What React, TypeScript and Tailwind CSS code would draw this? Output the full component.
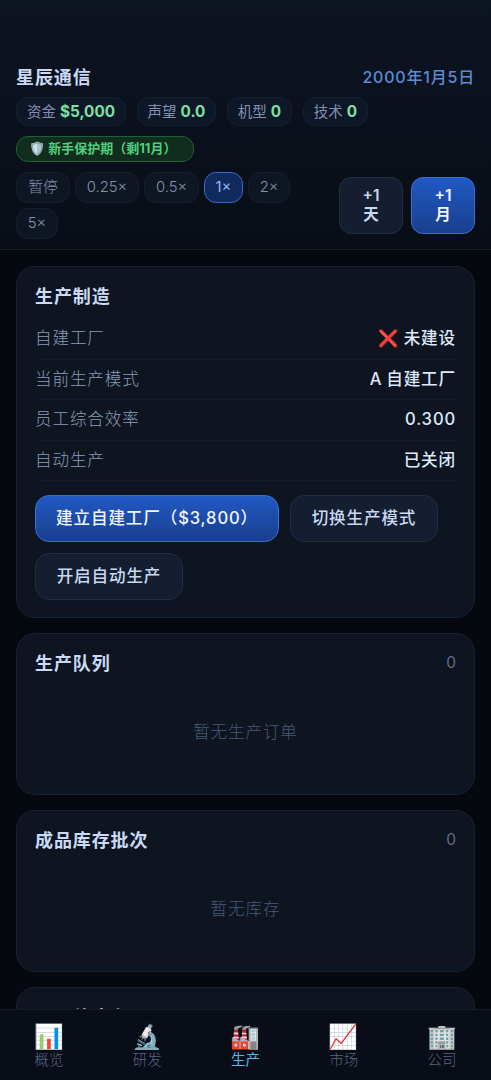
import { useState } from 'react';
import type { ReactNode } from 'react';
import clsx from 'clsx';

const STATS = [
  { label: '资金', value: '$5,000', width: 'w-[110px]' },
  { label: '声望', value: '0.0', width: 'w-[79px]' },
  { label: '机型', value: '0', width: 'w-[65px]' },
  { label: '技术', value: '0', width: 'w-[65px]' },
];

const SPEEDS = [
  { label: '暂停', width: 'w-[54px]' },
  { label: '0.25×', width: 'w-[64px]' },
  { label: '0.5×', width: 'w-[55px]' },
  { label: '1×', width: 'w-[39px]' },
  { label: '2×', width: 'w-[42px]' },
  { label: '5×', width: 'w-[42px]' },
];

const ROWS = [
  { label: '自建工厂', value: '❌ 未建设' },
  { label: '当前生产模式', value: 'A 自建工厂' },
  { label: '员工综合效率', value: '0.300' },
  { label: '自动生产', value: '已关闭' },
];

const TABS = [
  { icon: '📊', label: '概览' },
  { icon: '🔬', label: '研发' },
  { icon: '🏭', label: '生产' },
  { icon: '📈', label: '市场' },
  { icon: '🏢', label: '公司' },
];

const primary = 'border-[#3673d0] bg-linear-to-b from-[#2059c4] to-[#193f8d] text-[#f0f6ff]';
const secondary = 'border-[#222d40] bg-[#141e30] text-[#c8d8f0]';

function Card({ title, count, children }: { title: string; count?: number; children?: ReactNode }) {
  return (
    <section className="shrink-0 rounded-[19px] border border-[#162131] bg-[#0e1521] px-[18px] pt-[15px]">
      <div className="flex h-7 items-center justify-between">
        <h2 className="text-[18px] font-bold tracking-[0.9px] text-[#c8daf5]">{title}</h2>
        {count !== undefined && <span className="text-[15.5px] text-[#5d6d8a]">{count}</span>}
      </div>
      {children}
    </section>
  );
}

function Empty({ text }: { text: string }) {
  return (
    <div className="flex h-[117px] items-center justify-center pb-[7px] text-[16.6px] font-light tracking-[0.85px] text-[#485877]">
      {text}
    </div>
  );
}

function ActionButton({ className, children }: { className: string; children: ReactNode }) {
  return (
    <button
      type="button"
      className={clsx(
        'h-[47px] rounded-[14px] border text-[16.6px] font-medium tracking-[0.85px] whitespace-nowrap',
        className
      )}
    >
      {children}
    </button>
  );
}

function App() {
  const [speed, setSpeed] = useState('1×');
  const [tab, setTab] = useState('生产');

  return (
    <div className="flex h-[1080px] flex-col overflow-hidden bg-[#05080e] font-[Inter,'Noto_Sans_CJK_SC','Noto_Color_Emoji',sans-serif]">
      <header className="h-[250px] shrink-0 border-b border-[#151c27] bg-linear-to-b from-[#0d1421] to-[#090d17] px-4 pt-[63px]">
        <div className="flex h-7 items-center justify-between">
          <h1 className="text-[18px] font-bold tracking-[0.9px] text-[#c8daf5]">星辰通信</h1>
          <span className="text-[16px] font-medium tracking-[0.8px] text-[#5b8bd4]">2000年1月5日</span>
        </div>

        <div className="mt-1.5 flex gap-[11px]">
          {STATS.map((s) => (
            <div
              key={s.label}
              className={clsx(
                'flex h-[29px] items-center justify-center gap-1 rounded-[12px] border border-[#162033] bg-[#0e1727] text-[14.5px] whitespace-nowrap text-[#8092b0]',
                s.width
              )}
            >
              {s.label}
              <b className="pt-px text-[15.3px] font-bold text-[#7ce0a2]">{s.value}</b>
            </div>
          ))}
        </div>

        <div className="mt-2.5 flex h-[26px] w-[178px] items-center rounded-[12px] border border-[#216039] bg-[#102d1d] pl-[12px] text-[13px] font-bold whitespace-nowrap text-[#50cf7e]">
          <span className="mr-[3px]">🛡️</span>
          <span>新手保护期（剩11月）</span>
        </div>

        <div className="mt-2.5 flex items-center justify-between">
          <div className="flex w-[300px] flex-wrap gap-x-[5px] gap-y-[5px]">
            {SPEEDS.map((s) => (
              <button
                key={s.label}
                type="button"
                onClick={() => setSpeed(s.label)}
                className={clsx(
                  'h-[31px] rounded-[12px] border pb-px text-[14.8px] whitespace-nowrap',
                  s.width,
                  s.label === speed
                    ? 'border-[#306bd0] bg-[#112a5b] text-[#91b8f5]'
                    : 'border-[#161f2e] bg-[#0e1624] font-light text-[#8492ac]'
                )}
              >
                {s.label}
              </button>
            ))}
          </div>
          <div className="flex gap-2">
            <button
              type="button"
              className={clsx('h-[57px] w-16 rounded-[12px] border pb-0.5 text-[15.5px] leading-[19px] font-semibold', secondary)}
            >
              +1
              <br />天
            </button>
            <button
              type="button"
              className={clsx('h-[57px] w-16 rounded-[12px] border pb-0.5 text-[15.5px] leading-[19px] font-semibold', primary)}
            >
              +1
              <br />月
            </button>
          </div>
        </div>
      </header>

      <main className="flex min-h-0 flex-1 flex-col gap-[15px] overflow-hidden px-4 pt-4">
        <Card title="生产制造">
          <dl className="mt-[9px]">
            {ROWS.map((r) => (
              <div
                key={r.label}
                className="flex h-[40.5px] items-center justify-between border-b border-[#121b29] text-[16.6px] tracking-[0.85px]"
              >
                <dt className="font-light text-[#8b9cb8]">{r.label}</dt>
                <dd className="font-medium text-[#dde8fa] [word-spacing:-1.5px]">{r.value}</dd>
              </div>
            ))}
          </dl>
          <div className="mt-3.5 mb-[17px] flex flex-wrap gap-[11px]">
            <ActionButton className={clsx('w-[244px]', primary)}>建立自建工厂（$3,800）</ActionButton>
            <ActionButton className={clsx('w-[148px]', secondary)}>切换生产模式</ActionButton>
            <ActionButton className={clsx('w-[148px]', secondary)}>开启自动生产</ActionButton>
          </div>
        </Card>
        <Card title="生产队列" count={0}>
          <Empty text="暂无生产订单" />
        </Card>
        <Card title="成品库存批次" count={0}>
          <Empty text="暂无库存" />
        </Card>
        <Card title="元器件库存" />
      </main>

      <nav className="flex h-[71px] shrink-0 border-t border-[#141b27] bg-[#090d17]">
        {TABS.map((t) => (
          <button
            key={t.label}
            type="button"
            onClick={() => setTab(t.label)}
            className={clsx(
              'flex flex-1 flex-col items-center pt-[12px]',
              t.label === tab ? 'text-[#5bb9e8]' : 'font-light text-[#566683]'
            )}
          >
            <span className="h-[28px] text-[24px] leading-[30px]">{t.icon}</span>
            <span className="text-[14.5px] leading-5">{t.label}</span>
          </button>
        ))}
      </nav>
    </div>
  );
}

export default App;
